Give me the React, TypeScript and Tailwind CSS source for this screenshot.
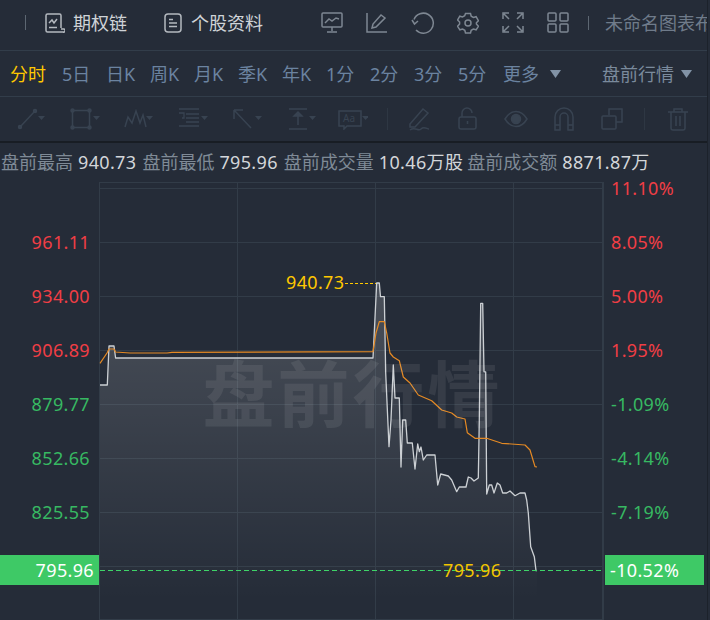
import React from 'react';

const PRICE = 'M100,385 L107.3,385 L109,346 L114,346 L115.6,358 L373,358 L376.7,283 L379.3,283 L380.5,296.7 L384.3,296.7 L385.7,373 L389,446.7 L391,420 L393.3,365 L395,398 L399.3,398 L401,467 L402.7,420 L405.7,420 L407.3,443 L412.3,443 L415,469 L417.7,444 L419.3,451.7 L421,447 L423.3,460 L426.7,455 L435,455 L437.7,485 L440.7,474 L448.3,476 L451.7,480 L456.7,491.7 L459.3,487 L466,487 L468.3,477 L471,478 L474,481 L478.3,478 L479.3,420 L480.7,303.3 L482.7,303.3 L484,371.7 L485.7,372 L486.7,494 L489.3,485 L491.7,485 L494,493 L497.3,483 L500,485 L502.7,493 L506.7,493 L510,491 L515,495.7 L520,493 L525,493 L526.7,500 L528.3,513 L530.7,546.7 L534.3,556.7 L536,570.7 L537,570.7';

const AVG = 'M100,363.3 L107,353 L109,349 L114,349 L115.5,352 L130,353 L167,353 L172,352.3 L373,351.7 L376,333 L379.3,321.7 L384.3,321.7 L386.7,333 L390,353 L393.3,357 L399.3,360.7 L403.3,377 L410,383 L418.3,395 L431.7,400.7 L441.7,410 L451.7,413 L456.7,417 L465,419 L467.3,432.7 L475,438.3 L486.7,438.3 L501.7,443.3 L525,445 L530,450 L535,466.7 L537,467';

const leftAxis = [
  { label: '', color: '' },
  { label: '961.11', color: 'text-[#f03e45]' },
  { label: '934.00', color: 'text-[#f03e45]' },
  { label: '906.89', color: 'text-[#f03e45]' },
  { label: '879.77', color: 'text-[#37b862]' },
  { label: '852.66', color: 'text-[#37b862]' },
  { label: '825.55', color: 'text-[#37b862]' },
];

const rightAxis = [
  { label: '11.10%', color: 'text-[#f03e45]' },
  { label: '8.05%', color: 'text-[#f03e45]' },
  { label: '5.00%', color: 'text-[#f03e45]' },
  { label: '1.95%', color: 'text-[#f03e45]' },
  { label: '-1.09%', color: 'text-[#37b862]' },
  { label: '-4.14%', color: 'text-[#37b862]' },
  { label: '-7.19%', color: 'text-[#37b862]' },
];

const tabs = ['5日', '日K', '周K', '月K', '季K', '年K', '1分', '2分', '3分', '5分'];

const Ico = ({ w, h, children, cls }: { w: number; h: number; children: React.ReactNode; cls?: string }) => (
  <svg width={w} height={h} viewBox={`0 0 ${w} ${h}`} fill="none" stroke="currentColor" strokeWidth="1.5" className={`shrink-0 ${cls ?? ''}`}>
    {children}
  </svg>
);

const Caret = () => <path d="M0 0h7l-3.5 4z" fill="currentColor" stroke="none" />;

const Info = ({ k, v, cls }: { k: string; v: string; cls?: string }) => (
  <>
    <span className="text-[#7f8a96]">{k}</span>
    <span className={`text-[#d3d6da] ml-[5px] tracking-[0.35px] ${cls ?? 'mr-[6px]'}`}>{v}</span>
  </>
);

export default function App() {
  return (
    <div className="w-[710px] h-[620px] overflow-hidden bg-[#252c38] font-['Noto_Sans','Noto_Sans_CJK_SC',sans-serif] text-[18px] leading-none">
      <div className="w-[708px] h-full border-r border-[#1c222b] flex flex-col">
        {/* Top bar */}
        <div className="h-[51px] shrink-0 border-b border-[#323d4a] flex items-center pl-[25px] pb-[5px] overflow-hidden whitespace-nowrap">
          <div className="w-px h-[15px] bg-[#5d6772] shrink-0" />
          <Ico w={21} h={20} cls="ml-[18px] text-[#b4b9bf]">
            <path d="M17 15V2.5a1.5 1.5 0 0 0-1.5-1.5h-12A1.5 1.5 0 0 0 2 2.5v15A1.5 1.5 0 0 0 3.5 19H19a1.5 1.5 0 0 0 1-3h-3" />
            <path d="M5 10l3-3 2 3 3-4M5 14.500h8" />
          </Ico>
          <span className="ml-[8px] text-[#cfd3d7]">期权链</span>
          <Ico w={18} h={20} cls="ml-[37px] text-[#b4b9bf]">
            <rect x="1" y="1" width="16" height="18" rx="3" />
            <path d="M5 6.500h4M5 10h8M5 13.500h8" />
          </Ico>
          <span className="ml-[9px] text-[#cfd3d7]">个股资料</span>
          <Ico w={22} h={21} cls="ml-[58px] text-[#7e8792]">
            <rect x="1" y="1" width="20" height="14" rx="1" />
            <path d="M4 11l4-4 3 2 4-3 3 1M11 15v4M6 20h10" />
          </Ico>
          <Ico w={22} h={21} cls="ml-[23px] text-[#7e8792]">
            <path d="M1 1v19h20" />
            <path d="M6 16l1-4L15 3l4 3-9 9z" />
          </Ico>
          <Ico w={24} h={22} cls="ml-[23px] text-[#7e8792]">
            <path d="M5 18A10 10 0 1 0 3 7.500" />
            <path d="M1 8l2.500 4L7 9" />
          </Ico>
          <Ico w={22} h={22} cls="ml-[22px] text-[#7e8792]">
            <path d="M8.500 1.500h5l.7 2.700 2.200 1.200 2.700-.7 2.300 4-2 2 0 1.300 2 2.300-2.300 3.500-2.700-.7-2.200 1.200-.7 2.700h-5l-.7-2.700-2.200-1.200-2.700.7-2.300-3.500 2-2.300V10L.500 8l2.300-3.800 2.700.7 2.200-1.200z" />
            <circle cx="11" cy="11" r="3" />
          </Ico>
          <Ico w={22} h={21} cls="ml-[23px] text-[#7e8792]">
            <path d="M1 7V1h6M15 1h6v6M1 14v6h6M15 20h6v-6M2 2l5 5M20 2l-5 5M2 19l5-5M20 19l-5-5" />
          </Ico>
          <Ico w={22} h={21} cls="ml-[23px] text-[#7e8792]">
            <rect x="1" y="1" width="8" height="8" rx="1" />
            <rect x="13" y="1" width="8" height="8" rx="1" />
            <rect x="1" y="12" width="8" height="8" rx="1" />
            <rect x="13" y="12" width="8" height="8" rx="1" />
          </Ico>
          <div className="ml-[19px] w-px h-[14px] bg-[#5d6772] shrink-0" />
          <span className="ml-[16px] text-[#6f7b8a]">未命名图表布局</span>
        </div>

        {/* Period tabs */}
        <div className="h-[46px] shrink-0 border-b border-[#323d4a] flex items-center pl-[10px] pr-[15px]">
          <span className="text-[#ffc800] mr-[16px]">分时</span>
          <div className="flex gap-[16px] text-[#6b83a0]">
            {tabs.map((t) => (
              <span key={t} className="w-[28px] whitespace-nowrap">{t}</span>
            ))}
          </div>
          <span className="ml-[17px] text-[#6b83a0]">更多</span>
          <svg width="11" height="8" viewBox="0 0 11 8" className="ml-[11px] text-[#8293a6]"><path d="M0 0h11L5.500 8z" fill="currentColor" /></svg>
          <span className="ml-auto text-[#7a8a9c]">盘前行情</span>
          <svg width="11" height="8" viewBox="0 0 11 8" className="ml-[7px] text-[#8293a6]"><path d="M0 0h11L5.500 8z" fill="currentColor" /></svg>
        </div>

        {/* Drawing tools */}
        <div className="h-[46px] shrink-0 border-b-[2px] border-[#181d24] flex items-center pl-[17px] text-[#384351]">
          <Ico w={28} h={22}>
            <path d="M3 19L18 3" />
            <circle cx="3" cy="19" r="1.500" fill="currentColor" />
            <circle cx="18" cy="3" r="1.500" fill="currentColor" />
            <g transform="translate(21 8)"><Caret /></g>
          </Ico>
          <Ico w={30} h={22} cls="ml-[25px]">
            <rect x="2.500" y="2.500" width="17" height="17" />
            <circle cx="2.500" cy="2.500" r="1.500" fill="currentColor" />
            <circle cx="19.500" cy="2.500" r="1.500" fill="currentColor" />
            <circle cx="2.500" cy="19.500" r="1.500" fill="currentColor" />
            <circle cx="19.500" cy="19.500" r="1.500" fill="currentColor" />
            <g transform="translate(23 8)"><Caret /></g>
          </Ico>
          <Ico w={30} h={22} cls="ml-[23px]">
            <path d="M2 19l3-10 4 6 4-12 4 12 3-8 3 12" />
            <g transform="translate(23 8)"><Caret /></g>
          </Ico>
          <Ico w={30} h={22} cls="ml-[25px]">
            <path d="M1 1h20M8 6h13M8 10h13M8 14h13M1 18h20" />
            <path d="M1 5h5v5H4" strokeWidth="1.300" />
            <g transform="translate(23 8)"><Caret /></g>
          </Ico>
          <Ico w={30} h={22} cls="ml-[24px]">
            <path d="M2 2l17 18M2 2h9M2 2v9" />
            <g transform="translate(23 8)"><Caret /></g>
          </Ico>
          <Ico w={29} h={22} cls="ml-[25px]">
            <path d="M2 1h18M2 21h18M11 5v12" />
            <path d="M7 8l4-4 4 4z" fill="currentColor" />
            <g transform="translate(22 8)"><Caret /></g>
          </Ico>
          <Ico w={30} h={22} cls="ml-[22px]">
            <path d="M1 3h22v15H9l-3 3v-3H1z" />
            <text x="5" y="14" fontSize="10" fill="currentColor" stroke="none">Aa</text>
            <g transform="translate(24 8)"><Caret /></g>
          </Ico>
          <div className="ml-[19px] w-px h-[22px] bg-[#2e3743]" />
          <Ico w={23} h={24} cls="ml-[20px]">
            <path d="M2 17L15 2l5 4L7 20H2z" />
            <path d="M2 23c5-4 8 2 11-1s6 0 8 0" />
          </Ico>
          <Ico w={20} h={24} cls="ml-[27px]">
            <rect x="1" y="10" width="17" height="12" rx="2" />
            <path d="M4 10V6a5 5 0 0 1 10 0M9.500 14v3" />
          </Ico>
          <Ico w={24} h={18} cls="ml-[26px]">
            <path d="M1 9c6-10 16-10 22 0-6 10-16 10-22 0z" />
            <circle cx="12" cy="9" r="4.500" fill="currentColor" />
          </Ico>
          <Ico w={20} h={24} cls="ml-[26px]">
            <path d="M1 23V10a9 9 0 0 1 18 0v13h-5V10a4 4 0 0 0-8 0v13zM1 18h5M14 18h5" />
          </Ico>
          <Ico w={24} h={24} cls="ml-[26px]">
            <path d="M9 8V2h13v13h-6" />
            <rect x="2" y="9" width="14" height="13" rx="1" />
          </Ico>
          <div className="ml-[20px] w-px h-[22px] bg-[#2e3743]" />
          <Ico w={22} h={24} cls="ml-[22px]">
            <path d="M1 5h20M7 5V2h8v3M4 5v16a2 2 0 0 0 2 2h10a2 2 0 0 0 2-2V5M9 9v10M13 9v10" />
          </Ico>
        </div>

        {/* Pre-market summary */}
        <div className="h-[39px] shrink-0 flex items-center pb-px pl-px whitespace-nowrap">
          <Info k="盘前最高" v="940.73" />
          <Info k="盘前最低" v="795.96" />
          <Info k="盘前成交量" v="10.46万股" cls="mr-[4px]" />
          <Info k="盘前成交额" v="8871.87万" />
        </div>

        {/* Chart */}
        <div className="relative flex flex-1 min-h-0 tracking-[0.35px]">
          <div className="w-[99px] shrink-0 -mt-[21px] pr-[9px] text-right">
            {leftAxis.map((a, i) => (
              <div key={i} className={`h-[54px] flex items-center justify-end ${a.color}`}>{a.label}</div>
            ))}
          </div>
          <svg width="505" height="438" viewBox="99 182 505 438" className="shrink-0">
            <defs>
              <linearGradient id="area" gradientUnits="userSpaceOnUse" x1="0" y1="283" x2="0" y2="600">
                <stop offset="0" stopColor="#fff" stopOpacity="0.17" />
                <stop offset="1" stopColor="#fff" stopOpacity="0" />
              </linearGradient>
            </defs>
            <g stroke="#323c48" strokeWidth="1" shapeRendering="crispEdges">
              {[182, 188, 242, 296, 350, 404, 458, 512, 566, 619].map((y) => (
                <line key={y} x1="99" x2="603" y1={y + 0.5} y2={y + 0.5} />
              ))}
              {[99, 237, 375, 513].map((x) => (
                <line key={x} x1={x + 0.5} x2={x + 0.5} y1="182" y2="620" />
              ))}
              <line x1="603" x2="603" y1="182" y2="620" strokeWidth="2" />
            </g>
            <path d={`${PRICE} L537,620 L100,620 Z`} fill="url(#area)" />
            <path d={PRICE} fill="none" stroke="#ccd0d4" strokeWidth="1.300" strokeLinejoin="round" />
            <path d={AVG} fill="none" stroke="#e58a24" strokeWidth="1.200" strokeLinejoin="round" />
            <line x1="345" x2="376" y1="283.5" y2="283.5" stroke="#ffc800" strokeWidth="1" strokeDasharray="3 2" shapeRendering="crispEdges" />
            <line x1="100" x2="603" y1="570.5" y2="570.5" stroke="#3ed468" strokeWidth="1" strokeDasharray="5 3" shapeRendering="crispEdges" />
          </svg>
          <div className="-mt-[21px] pl-[7px]">
            {rightAxis.map((a) => (
              <div key={a.label} className={`h-[54px] flex items-center ${a.color}`}>{a.label}</div>
            ))}
          </div>

          {/* Overlays on the chart */}
          <div className="absolute left-[103px] top-[171px] w-[505px] text-center text-[72px] font-bold tracking-[3px] text-white/8 leading-[80px] pointer-events-none pr-[6px]">盘前行情</div>
          <span className="absolute left-[286px] top-[89px] text-[#ffc800] leading-[22px]">940.73</span>
          <span className="absolute left-[443px] top-[377px] text-[#f2c500] leading-[22px]">795.96</span>
          <div className="absolute left-0 top-[373px] w-[99px] h-[30px] bg-[#3ec966] text-white flex items-center justify-end pr-[5px]">795.96</div>
          <div className="absolute left-[605px] top-[373px] w-[99px] h-[30px] bg-[#3ec966] text-white flex items-center pl-[5px]">-10.52%</div>
        </div>
      </div>
    </div>
  );
}
